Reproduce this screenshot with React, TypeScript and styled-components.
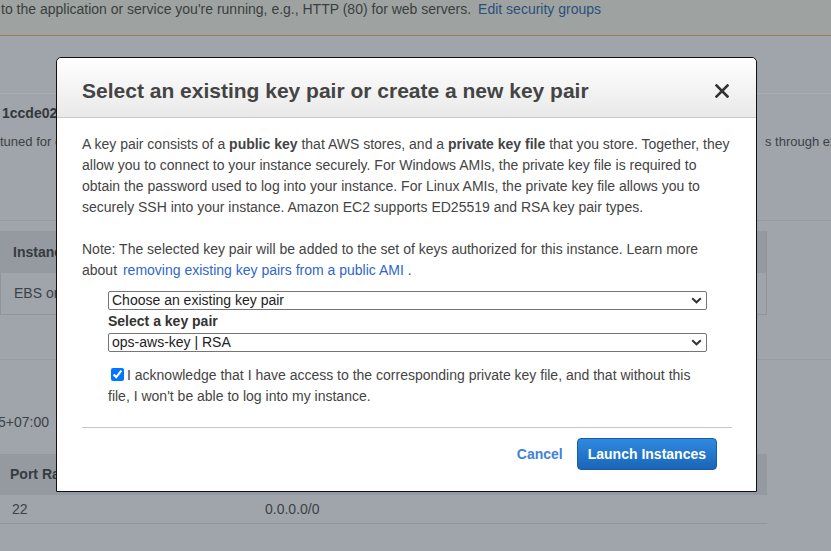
import React from "react";
import styled, { createGlobalStyle } from "styled-components";

const GlobalStyle = createGlobalStyle`
  html, body {
    margin: 0;
    padding: 0;
  }
  body {
    width: 831px;
    height: 551px;
    overflow: hidden;
    background: #a0a5ab;
    font-family: "Liberation Sans", Arial, sans-serif;
  }
`;

function App() {
  return (
    <>
      <GlobalStyle />
      <Page>
        <TopBand>
          <span>to the application or service you're running, e.g., HTTP (80) for web servers.</span>
          <BgLink>Edit security groups</BgLink>
        </TopBand>
        <Spacer />
        <SummaryBlock>
          <BgId>1ccde02</BgId>
          <BgLine>
            <span>tuned for c</span>
            <RightClip>s through extr</RightClip>
          </BgLine>
        </SummaryBlock>
        <TableBlock>
          <BgTable $framed>
            <BgHead>Instance type</BgHead>
            <BgRow>EBS only</BgRow>
          </BgTable>
        </TableBlock>
        <RulesBlock>
          <BgStamp>5+07:00</BgStamp>
          <BgTable>
            <BgHead $short>Port Range</BgHead>
            <BgRowSplit>
              <span>22</span>
              <span>0.0.0.0/0</span>
            </BgRowSplit>
          </BgTable>
        </RulesBlock>

        <Modal>
          <ModalHeader>
            <Title>Select an existing key pair or create a new key pair</Title>
            <CloseButton aria-label="Close">
              <svg width="14" height="14" viewBox="0 0 14 14">
                <path d="M1.5 1.5 L12.5 12.5 M12.5 1.5 L1.5 12.5" stroke="#333" strokeWidth="2.6" strokeLinecap="square" />
              </svg>
            </CloseButton>
          </ModalHeader>
          <ModalBody>
            <Para>
              A key pair consists of a <b>public key</b> that AWS stores, and a <b>private key file</b> that you store. Together, they allow you to connect to your instance securely. For Windows AMIs, the private key file is required to obtain the password used to log into your instance. For Linux AMIs, the private key file allows you to securely SSH into your instance. Amazon EC2 supports ED25519 and RSA key pair types.
            </Para>
            <Para $last>
              Note: The selected key pair will be added to the set of keys authorized for this instance. Learn more about <Link>removing existing key pairs from a public AMI</Link> .
            </Para>
            <FormArea>
              <SelectWrap>
                <Select defaultValue="existing">
                  <option value="existing">Choose an existing key pair</option>
                </Select>
                <Chevron />
              </SelectWrap>
              <FieldLabel>Select a key pair</FieldLabel>
              <SelectWrap>
                <Select defaultValue="ops">
                  <option value="ops">ops-aws-key | RSA</option>
                </Select>
                <Chevron />
              </SelectWrap>
              <Acknowledge>
                <CheckBox type="checkbox" defaultChecked />
                I acknowledge that I have access to the corresponding private key file, and that without this file, I won't be able to log into my instance.
              </Acknowledge>
            </FormArea>
            <Divider />
          </ModalBody>
          <Footer>
            <CancelButton>Cancel</CancelButton>
            <PrimaryButton>Launch Instances</PrimaryButton>
          </Footer>
        </Modal>
      </Page>
    </>
  );
}

function Chevron() {
  return (
    <ChevronIcon width="11" height="7" viewBox="0 0 11 7">
      <path d="M1.2 1.2 L5.5 5.3 L9.8 1.2" fill="none" stroke="#333" strokeWidth="2" />
    </ChevronIcon>
  );
}

const Page = styled.div`
  position: relative;
  width: 831px;
  height: 551px;
  overflow: hidden;
  background: #a0a5ab;
  color: #3c4146;
  font-size: 14px;
`;

const TopBand = styled.div`
  height: 35px;
  border-bottom: 1px solid #9c7d58;
  background: #9ea3a1;
  padding-left: 1px;
  line-height: 19px;
  color: #3a3e40;
  white-space: nowrap;
`;

const BgLink = styled.span`
  color: #2c4f7c;
  margin-left: 7px;
`;

const Spacer = styled.div`
  height: 57px;
  border-bottom: 1px solid #a9aeb3;
`;

const SummaryBlock = styled.div`
  height: 117px;
  padding-top: 9px;
  border-bottom: 1px solid #969ca2;
`;

const BgId = styled.div`
  font-weight: bold;
  line-height: 20px;
  color: #32373c;
  padding-left: 2px;
`;

const BgLine = styled.div`
  display: flex;
  margin-top: 9px;
  line-height: 20px;
  font-size: 13px;
  white-space: nowrap;
`;

const RightClip = styled.span`
  margin-left: auto;
  width: 66px;
  overflow: hidden;
`;

const TableBlock = styled.div`
  height: 128px;
  padding-top: 10px;
  border-bottom: 1px solid #969ca2;
`;

const BgTable = styled.div<{ $framed?: boolean }>`
  width: 767px;
  box-sizing: border-box;
  border-right: ${(p) => (p.$framed ? "1px solid #8f959b" : "none")};
`;

const BgHead = styled.div<{ $short?: boolean }>`
  height: ${(p) => (p.$short ? "41px" : "42px")};
  line-height: ${(p) => (p.$short ? "41px" : "42px")};
  padding-left: ${(p) => (p.$short ? "10px" : "13px")};
  background: #949aa0;
  font-weight: bold;
  color: #363b40;
  white-space: nowrap;
`;

const BgRow = styled.div`
  height: 41px;
  line-height: 41px;
  padding-left: 13px;
  border: 1px solid #8f959b;
  border-top: none;
  border-right: none;
`;

const RulesBlock = styled.div`
  padding-top: 52px;
`;

const BgStamp = styled.div`
  line-height: 20px;
  margin-left: -2px;
  margin-bottom: 22px;
`;

const BgRowSplit = styled.div`
  display: grid;
  grid-template-columns: 253px 1fr;
  height: 28px;
  line-height: 28px;
  padding-left: 12px;
  border-bottom: 1px solid #8f959b;
`;

const Modal = styled.div`
  position: absolute;
  left: 56px;
  top: 57px;
  width: 701px;
  box-sizing: border-box;
  background: #fff;
  border: 1px solid #101010;
  border-radius: 5px 5px 0 0;
  color: #444;
  font-size: 14px;
`;

const ModalHeader = styled.div`
  height: 52px;
  box-sizing: content-box;
  display: flex;
  align-items: center;
  justify-content: space-between;
  padding: 7px 27px 0 25px;
  border-bottom: 1px solid #c8c8c8;
  border-radius: 5px 5px 0 0;
  background: linear-gradient(#ffffff, #e9e9e9);
`;

const Title = styled.h2`
  margin: 0;
  font-size: 21px;
  font-weight: bold;
  color: #444;
`;

const CloseButton = styled.button`
  display: flex;
  padding: 0;
  border: none;
  background: none;
`;

const ModalBody = styled.div`
  padding: 16px 24px 0 25px;
`;

const Para = styled.p<{ $last?: boolean }>`
  margin: 0 0 ${(p) => (p.$last ? "0" : "21px")};
  line-height: 21px;
`;

const Link = styled.a`
  color: #2f67cc;
  margin-left: 2px;
`;

const FormArea = styled.div`
  padding: 10px 25px 0 26px;
`;

const SelectWrap = styled.div`
  position: relative;
  height: 19px;
`;

const Select = styled.select`
  appearance: none;
  width: 100%;
  height: 19px;
  box-sizing: border-box;
  margin: 0;
  padding: 0 0 0 3px;
  border: 1px solid #767676;
  border-radius: 2px;
  background: #fff;
  color: #222;
  font-family: "Liberation Sans", Arial, sans-serif;
  font-size: 14px;
  line-height: 17px;
`;

const ChevronIcon = styled.svg`
  position: absolute;
  right: 5px;
  top: 6px;
  pointer-events: none;
`;

const FieldLabel = styled.div`
  font-weight: bold;
  line-height: 23px;
  color: #333;
`;

const Acknowledge = styled.label`
  display: block;
  margin-top: 13px;
  line-height: 21px;
  color: #444;
`;

const CheckBox = styled.input`
  width: 13px;
  height: 13px;
  margin: 0 3px 0 3px;
  vertical-align: -1px;
  accent-color: #0075ff;
`;

const Divider = styled.div`
  margin-top: 20px;
  border-top: 1px solid #c6c6c6;
`;

const Footer = styled.div`
  display: flex;
  justify-content: flex-end;
  align-items: center;
  gap: 14px;
  padding: 10px 39px 21px 0;
`;

const CancelButton = styled.button`
  padding: 0;
  border: none;
  background: none;
  color: #3f82d8;
  font-family: "Liberation Sans", Arial, sans-serif;
  font-size: 14px;
  font-weight: bold;
`;

const PrimaryButton = styled.button`
  height: 32px;
  padding: 0 10px;
  border: 1px solid #1b5da4;
  border-radius: 4px;
  background: linear-gradient(#2f8ae0, #1a65b8);
  color: #fff;
  font-family: "Liberation Sans", Arial, sans-serif;
  font-size: 14px;
  font-weight: bold;
`;

export default App;
